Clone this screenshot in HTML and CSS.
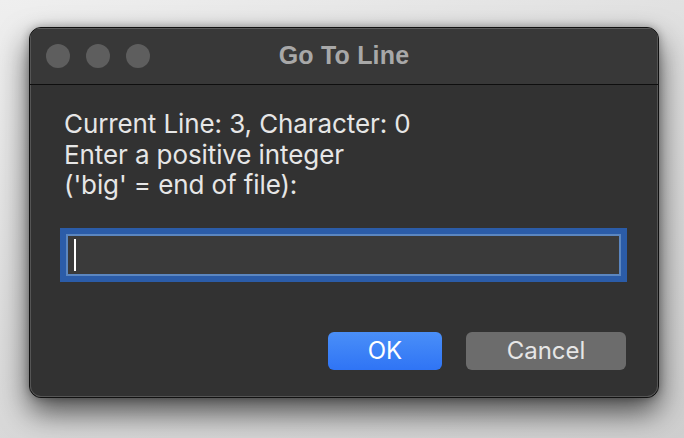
FILE: index.html
```html
<!DOCTYPE html>
<html>
<head>
<meta charset="utf-8">
<link rel="stylesheet" href="styles.css">
</head>
<body>
<div class="desk">
  <div class="window">
    <div class="titlebar">
      <div class="lights">
        <span class="light"></span>
        <span class="light"></span>
        <span class="light"></span>
      </div>
      <div class="title">Go To Line</div>
    </div>
    <div class="content">
      <div class="message">
        <div>Current Line: 3, Character: 0</div>
        <div>Enter a positive integer</div>
        <div>('big' = end of file):</div>
      </div>
      <div class="field-ring">
        <div class="field"><span class="caret"></span></div>
      </div>
      <div class="buttons">
        <button class="btn ok">OK</button>
        <button class="btn cancel">Cancel</button>
      </div>
    </div>
  </div>
</div>
</body>
</html>
```
FILE: styles.css
```css
html, body {
  margin: 0;
  padding: 0;
  width: 684px;
  height: 438px;
  overflow: hidden;
}
body {
  background: linear-gradient(160deg, #efefef 0%, #dcdcdc 50%, #cfcfcf 100%);
  font-family: Inter, "Liberation Sans", sans-serif;
}
.desk {
  padding: 27px 25px 0 29px;
}
.window {
  width: 628px;
  height: 369px;
  border: 1px solid #111;
  border-radius: 12px;
  background: #323232;
  box-shadow: inset 0 0 0 1px #555, 0 14px 30px rgba(0,0,0,0.65), 0 0 8px rgba(0,0,0,0.3);
  display: flex;
  flex-direction: column;
  overflow: hidden;
}
.titlebar {
  height: 56px;
  background: #383838;
  border-bottom: 1px solid #0e0e0e;
  box-shadow: inset 0 1px 0 #5c5c5c, inset 1px 0 0 #555, inset -1px 0 0 #555;
  display: flex;
  align-items: center;
  position: relative;
  flex-shrink: 0;
}
.lights {
  display: flex;
  gap: 16px;
  padding-left: 16px;
}
.light {
  width: 24px;
  height: 24px;
  border-radius: 50%;
  background: #5e5e5e;
}
.title {
  position: absolute;
  left: 0;
  right: 0;
  top: 0;
  bottom: 0;
  display: flex;
  align-items: center;
  justify-content: center;
  font-family: "Liberation Sans", Arial, sans-serif;
  font-weight: bold;
  font-size: 25px;
  letter-spacing: 0.2px;
  color: #a8a8a8;
  padding-bottom: 2px;
}
.content {
  flex: 1;
  display: flex;
  flex-direction: column;
  padding: 24px 31px 0 30px;
  box-shadow: inset 1px 0 0 #555, inset -1px 0 0 #555, inset 0 -1px 0 #555;
}
.message {
  padding-left: 4px;
  color: #e6e6e6;
  font-size: 26px;
  letter-spacing: -0.1px;
  line-height: 30.5px;
}
.field-ring {
  margin-top: 27px;
  height: 54px;
  background: #2b5ca8;
  padding: 6px;
  box-sizing: border-box;
}
.field {
  height: 100%;
  box-sizing: border-box;
  border: 2px solid #5b86c0;
  background: #3a3a3a;
  display: flex;
  align-items: center;
  padding-left: 6px;
}
.caret {
  width: 2px;
  height: 32px;
  background: #ffffff;
}
.buttons {
  display: flex;
  justify-content: flex-end;
  gap: 24px;
  margin-top: 50px;
  padding-right: 1px;
}
.btn {
  height: 38px;
  border: none;
  border-radius: 6px;
  font-family: Inter, "Liberation Sans", sans-serif;
  font-size: 24px;
  padding: 0;
  padding-bottom: 1px;
}
.ok {
  width: 114px;
  background: linear-gradient(#4a8ff8, #2f74f5);
  color: #ffffff;
}
.cancel {
  width: 160px;
  background: #6c6c6c;
  color: #e6e6e6;
}
```
